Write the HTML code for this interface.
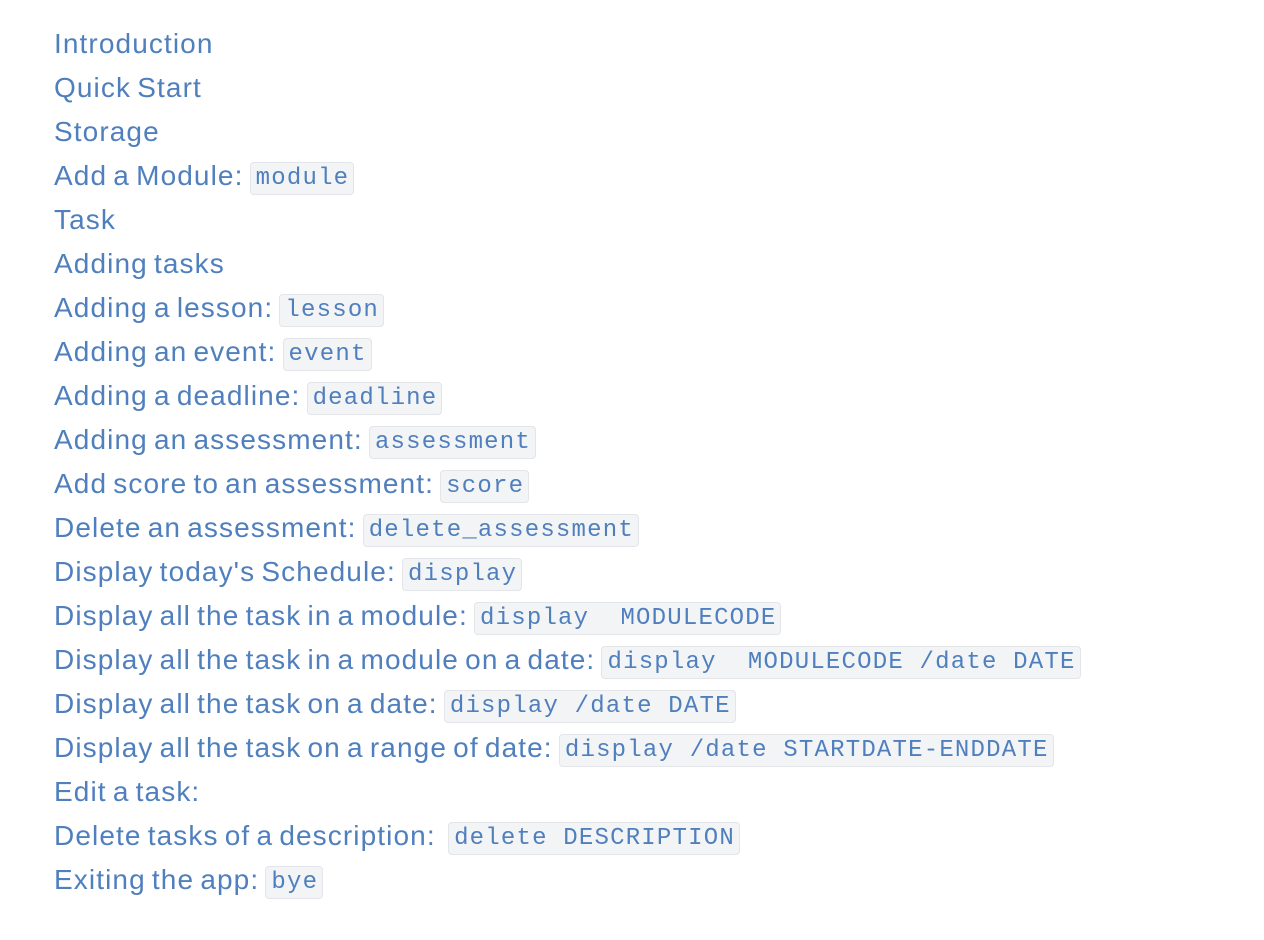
<!DOCTYPE html>
<html><head><meta charset="utf-8"><style>
html,body{margin:0;background:#fff;width:1264px;height:940px;overflow:hidden}
.list{position:absolute;left:54px;top:22px;font-family:"Liberation Sans",sans-serif;font-size:28px;letter-spacing:1.1px;word-spacing:-2.7px;color:#4f7fbd;line-height:44px}
.list div{height:44px;white-space:pre}
code{font-family:"Liberation Mono",monospace;font-size:24px;letter-spacing:1.2px;word-spacing:0;background:#f3f4f6;border:1px solid #e3e5e9;border-radius:4px;padding:2px 4px 2px 5px;color:#4f7fbd;vertical-align:1px}
</style></head><body><div class="list">
<div>Introduction</div>
<div>Quick Start</div>
<div>Storage</div>
<div>Add a Module: <code>module</code></div>
<div>Task</div>
<div>Adding tasks</div>
<div>Adding a lesson: <code>lesson</code></div>
<div>Adding an event: <code>event</code></div>
<div>Adding a deadline: <code>deadline</code></div>
<div>Adding an assessment: <code>assessment</code></div>
<div>Add score to an assessment: <code>score</code></div>
<div>Delete an assessment: <code>delete_assessment</code></div>
<div>Display today's Schedule: <code>display</code></div>
<div>Display all the task in a module: <code>display  MODULECODE</code></div>
<div>Display all the task in a module on a date: <code>display  MODULECODE /date DATE</code></div>
<div>Display all the task on a date: <code>display /date DATE</code></div>
<div>Display all the task on a range of date: <code>display /date STARTDATE-ENDDATE</code></div>
<div>Edit a task:</div>
<div>Delete tasks of a description:  <code>delete DESCRIPTION</code></div>
<div>Exiting the app: <code>bye</code></div>
</div></body></html>
